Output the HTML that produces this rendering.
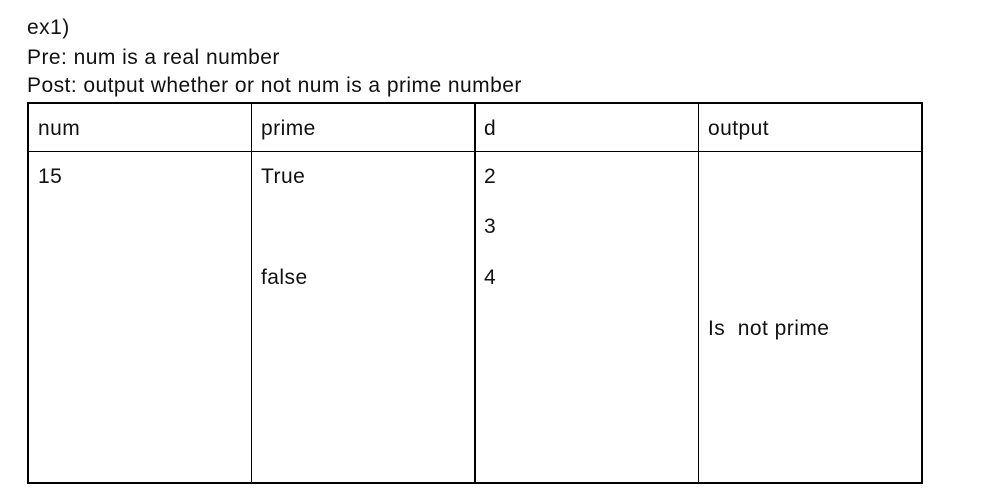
<!DOCTYPE html>
<html><head><style>
body{margin:0;width:991px;height:504px;background:#fff;position:relative;overflow:hidden;font-family:"Liberation Sans",sans-serif;font-size:21px;letter-spacing:0.45px;color:#111;}
.t{position:absolute;line-height:20px;white-space:pre;}
.l{position:absolute;background:#000;}
</style></head><body>
<div class="t" style="left:27px;top:18px">ex1)</div>
<div class="t" style="left:27px;top:48px">Pre: num is a real number</div>
<div class="t" style="left:27px;top:76px">Post: output whether or not num is a prime number</div>
<div class="l" style="left:27px;top:102px;width:896px;height:2px"></div>
<div class="l" style="left:27px;top:151px;width:896px;height:1px"></div>
<div class="l" style="left:27px;top:482px;width:896px;height:2px"></div>
<div class="l" style="left:27px;top:102px;width:2px;height:382px"></div>
<div class="l" style="left:251px;top:102px;width:1px;height:382px"></div>
<div class="l" style="left:474px;top:102px;width:2px;height:382px"></div>
<div class="l" style="left:698px;top:102px;width:1px;height:382px"></div>
<div class="l" style="left:921px;top:102px;width:2px;height:382px"></div>
<div class="t" style="left:38px;top:119px">num</div>
<div class="t" style="left:261px;top:119px">prime</div>
<div class="t" style="left:484px;top:119px">d</div>
<div class="t" style="left:708px;top:119px">output</div>
<div class="t" style="left:38px;top:167px">15</div>
<div class="t" style="left:261px;top:167px">True</div>
<div class="t" style="left:484px;top:167px">2</div>
<div class="t" style="left:484px;top:217px">3</div>
<div class="t" style="left:261px;top:268px">false</div>
<div class="t" style="left:484px;top:268px">4</div>
<div class="t" style="left:708px;top:319px">Is  not prime</div>
</body></html>
